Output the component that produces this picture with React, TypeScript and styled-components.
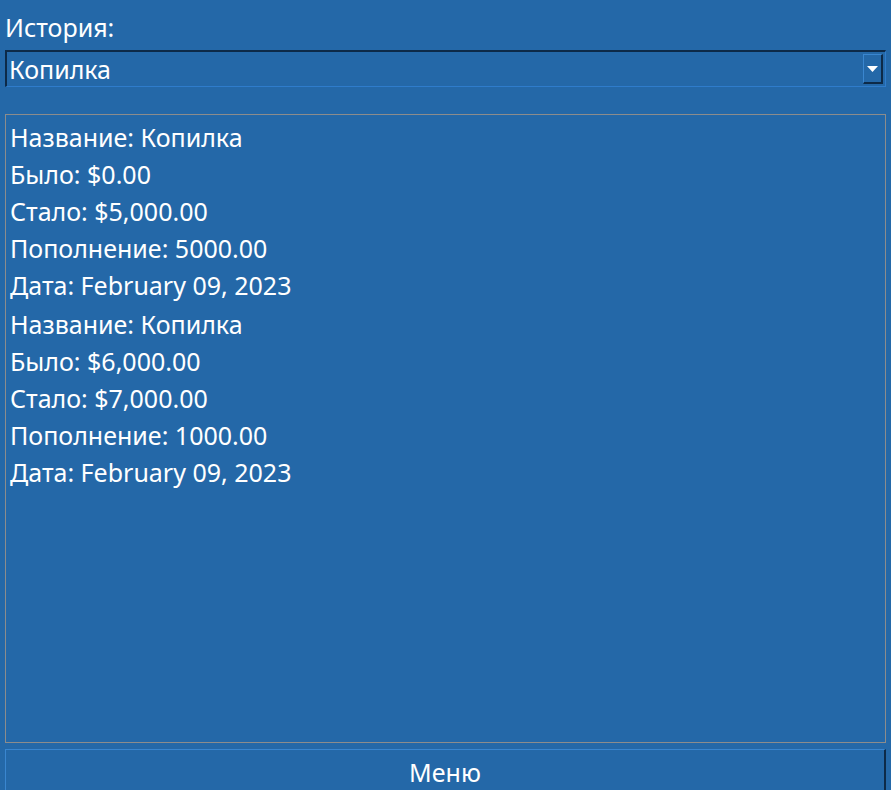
import React from "react";
import styled, { createGlobalStyle } from "styled-components";

const Global = createGlobalStyle`
  html, body { margin: 0; padding: 0; background: #2468a8; }
  body { font-family: "Noto Sans", "Open Sans", sans-serif; color: #ffffff; }
`;

const Page = styled.div`
  height: 790px;
  box-sizing: border-box;
  padding: 10px 5px 0 5px;
  display: flex;
  flex-direction: column;
  overflow: hidden;
`;

const Label = styled.div`
  font-size: 25px;
  line-height: 34px;
  height: 40px;
  flex-shrink: 0;
`;

const Combo = styled.div`
  height: 37px;
  flex-shrink: 0;
  box-sizing: border-box;
  display: flex;
  align-items: center;
  border-top: 2px solid #0d2a48;
  border-left: 2px solid #0d2a48;
  border-right: 1px solid #2f7ccb;
  border-bottom: 1px solid #2f7ccb;
  padding: 2px;
`;

const ComboText = styled.div`
  flex: 1;
  font-size: 25px;
  line-height: 30px;
  padding-left: 0;
`;

const DropButton = styled.div`
  width: 20px;
  height: 30px;
  box-sizing: border-box;
  border-top: 1px solid #3a86cf;
  border-left: 1px solid #3a86cf;
  border-right: 2px solid #0d2a48;
  border-bottom: 2px solid #0d2a48;
  display: flex;
  align-items: center;
  justify-content: center;
`;

const ListBox = styled.div`
  margin-top: 27px;
  height: 629px;
  flex-shrink: 0;
  box-sizing: border-box;
  border: 1px solid #8c8c8c;
  padding: 4px 0 0 4px;
  display: flex;
  flex-direction: column;
  gap: 2px;
`;

const Record = styled.div`
  display: flex;
  flex-direction: column;
`;

const Line = styled.div`
  font-size: 25px;
  line-height: 37px;
  height: 37px;
  white-space: nowrap;
`;

const MenuButton = styled.div`
  margin-top: 6px;
  height: 44px;
  flex-shrink: 0;
  box-sizing: border-box;
  border-top: 1px solid #3a86cf;
  border-left: 1px solid #3a86cf;
  border-right: 2px solid #0d2a48;
  border-bottom: 2px solid #0d2a48;
  display: flex;
  align-items: center;
  justify-content: center;
  font-size: 25px;
  padding-top: 2px;
`;

const records = [
  { name: "Копилка", was: "$0.00", now: "$5,000.00", add: "5000.00", date: "February 09, 2023" },
  { name: "Копилка", was: "$6,000.00", now: "$7,000.00", add: "1000.00", date: "February 09, 2023" },
];

export default function App() {
  return (
    <>
      <Global />
      <Page>
        <Label>История:</Label>
        <Combo>
          <ComboText>Копилка</ComboText>
          <DropButton>
            <svg width="11" height="6" viewBox="0 0 11 6">
              <polygon points="0,0 11,0 5.5,6" fill="#ffffff" />
            </svg>
          </DropButton>
        </Combo>
        <ListBox>
          {records.map((r, i) => (
            <Record key={i}>
              <Line>Название: {r.name}</Line>
              <Line>Было: {r.was}</Line>
              <Line>Стало: {r.now}</Line>
              <Line>Пополнение: {r.add}</Line>
              <Line>Дата: {r.date}</Line>
            </Record>
          ))}
        </ListBox>
        <MenuButton>Меню</MenuButton>
      </Page>
    </>
  );
}
